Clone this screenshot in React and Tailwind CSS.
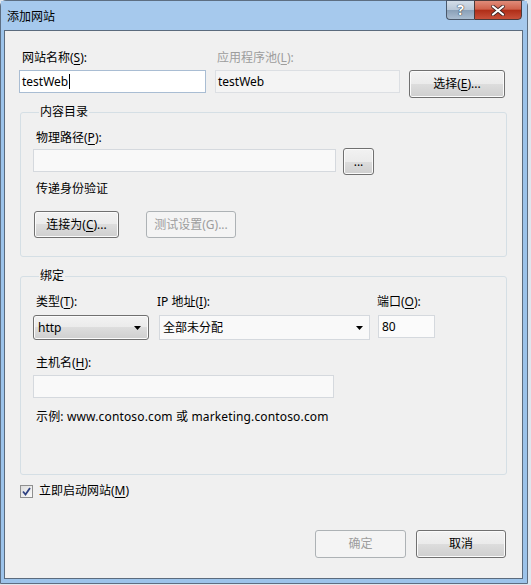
import React from "react";

const font = "font-['Noto_Sans','Noto_Sans_CJK_SC',sans-serif]";

const btn =
  "flex items-center justify-center rounded-[3px] border border-[#707070] bg-[linear-gradient(#f2f2f2_0%,#ebebeb_50%,#dddddd_50%,#cfcfcf_100%)] shadow-[inset_0_0_0_1px_#fbfbfb] text-[12px] text-black";
const btnOff =
  "flex items-center justify-center rounded-[3px] border border-[#adb2b5] bg-[#f4f4f4] text-[12px] text-[#9d9d9d]";
const field = "flex items-center border border-[#d5d9de] bg-[#f9f9f9] px-[3px] text-[12px]";

function Arrow() {
  return (
    <svg width="7" height="4" viewBox="0 0 7 4">
      <polygon points="0,0 7,0 3.5,4" fill="#000" />
    </svg>
  );
}

function Label({ children, gray, className = "" }) {
  return (
    <div className={`text-[12px] leading-[16px] ${gray ? "text-[#9d9d9d]" : "text-black"} ${className}`}>
      {children}
    </div>
  );
}

function Group({ title, className = "", children }) {
  return (
    <fieldset className={`ml-[1px] rounded-[3px] border border-[#d5dfe5] ${className}`}>
      <legend className="ml-[6px] px-[1px] text-[12px] leading-[16px] text-black">{title}</legend>
      {children}
    </fieldset>
  );
}

export default function App() {
  return (
    <div className={`h-[585px] w-[531px] bg-[#dfe6ee] ${font}`}>
      <div className="flex h-[584px] w-[528px] flex-col rounded-t-[6px] border border-[#5d6e82] bg-[#9cc3ea]">
        {/* title bar */}
        <div className="flex h-[29px] bg-[#a6c9ed]">
          <div className="ml-[6px] pt-[8px] text-[12px] leading-[16px] text-black">添加网站</div>
          <div className="ml-auto mr-[5px] -mt-[1px] flex self-start">
            <div className="flex h-[20px] w-[28px] items-center justify-center rounded-bl-[4px] border border-r-0 border-[#4a586b] bg-[linear-gradient(#d3dde8_0%,#b9c8d8_48%,#8aa0b8_52%,#aabdd1_100%)]">
              <span className="text-[14px] font-bold leading-none text-white [text-shadow:0_0_1px_#1c2430,0_0_1px_#1c2430]">
                ?
              </span>
            </div>
            <div className="flex h-[20px] w-[48px] items-center justify-center rounded-br-[4px] border border-[#4a3a3a] bg-[linear-gradient(#e08c7a_0%,#d0624c_45%,#b02e18_52%,#c8503a_100%)]">
              <svg width="14" height="11" viewBox="0 0 14 11">
                <path d="M2 1.5 L12 9.5 M12 1.5 L2 9.5" stroke="#3a2222" strokeWidth="3.6" strokeLinecap="round" />
                <path d="M2 1.5 L12 9.5 M12 1.5 L2 9.5" stroke="#ffffff" strokeWidth="2.2" strokeLinecap="round" />
              </svg>
            </div>
          </div>
        </div>

        {/* client area */}
        <div className="ml-[3px] mr-[4px] flex h-[549px] flex-col border border-[#5b6b7d] bg-[#f0f0f0] pl-[14px] pr-[15px] pt-[19px]">
          <div className="flex gap-[9px]">
            <div className="w-[187px]">
              <Label className="ml-[3px]">
                网站名称(<u className="underline-offset-2">S</u>):
              </Label>
              <div className="mt-[4px] flex h-[23px] items-center border border-[#a9bdd3] bg-white px-[2px] text-[12px]">
                testWeb
                <span className="ml-[1px] h-[15px] w-px bg-black" />
              </div>
            </div>
            <div className="w-[185px]">
              <Label gray className="ml-[2px]">
                应用程序池(<u className="underline-offset-2">L</u>):
              </Label>
              <div className="mt-[4px] flex h-[23px] items-center border border-[#dcdfe3] bg-[#f4f4f4] px-[2px] text-[12px] text-black">
                testWeb
              </div>
            </div>
            <div className={`${btn} mt-[20px] h-[28px] w-[96px]`}>
              选择(<u className="underline-offset-2">E</u>)...
            </div>
          </div>

          <Group title="内容目录" className="mt-[6px] pb-[18px] pl-[12px]">
            <Label className="ml-[3px] mt-[10px]">
              物理路径(<u className="underline-offset-2">P</u>):
            </Label>
            <div className="mt-[2px] flex items-start gap-[7px]">
              <div className={`${field} mt-[1px] h-[23px] w-[303px]`} />
              <div className={`${btn} h-[27px] w-[31px] leading-none`}>...</div>
            </div>
            <Label className="ml-[3px] mt-[6px]">传递身份验证</Label>
            <div className="ml-[1px] mt-[14px] flex gap-[27px]">
              <div className={`${btn} h-[27px] w-[85px]`}>
                连接为(<u className="underline-offset-2">C</u>)...
              </div>
              <div className={`${btnOff} h-[27px] w-[90px]`}>测试设置(G)...</div>
            </div>
          </Group>

          <Group title="绑定" className="mt-[11px] pb-[49px] pl-[12px]">
            <div className="mt-[10px] flex">
              <div className="w-[116px]">
                <Label className="ml-[3px]">
                  类型(<u className="underline-offset-2">T</u>):
                </Label>
                <div className={`${btn} mt-[5px] h-[25px] w-full justify-between! pl-[4px] pr-[7px]`}>
                  <span>http</span>
                  <Arrow />
                </div>
              </div>
              <div className="ml-[8px] w-[213px]">
                <Label>
                  IP 地址(<u className="underline-offset-2">I</u>):
                </Label>
                <div className={`${field} ml-[2px] mt-[5px] h-[25px] w-[211px] justify-between pr-[6px]`}>
                  <span>全部未分配</span>
                  <Arrow />
                </div>
              </div>
              <div className="ml-[7px]">
                <Label>
                  端口(<u className="underline-offset-2">O</u>):
                </Label>
                <div className={`${field} ml-[1px] mt-[5px] h-[23px] w-[57px] bg-[#fbfbfb]`}>80</div>
              </div>
            </div>
            <Label className="ml-[3px] mt-[15px]">
              主机名(<u className="underline-offset-2">H</u>):
            </Label>
            <div className={`${field} mt-[4px] h-[23px] w-[301px]`} />
            <Label className="ml-[3px] mt-[11px] tracking-[0.15px]">
              示例: www.contoso.com 或 marketing.contoso.com
            </Label>
          </Group>

          <div className="ml-[1px] mt-[8px] flex items-center gap-[6px]">
            <div className="flex h-[13px] w-[13px] items-center justify-center border border-[#8e8f8f] bg-[linear-gradient(135deg,#dcdcdc,#fbfbfb)]">
              <svg width="9" height="9" viewBox="0 0 9 9">
                <path d="M1 4.5 L3.5 7.5 L8 1" fill="none" stroke="#2f4282" strokeWidth="1.8" />
              </svg>
            </div>
            <Label>
              立即启动网站(<u className="underline-offset-2">M</u>)
            </Label>
          </div>

          <div className="mt-[31px] flex justify-end gap-[10px] pr-[1px]">
            <div className={`${btnOff} h-[28px] w-[91px]`}>确定</div>
            <div className={`${btn} h-[28px] w-[90px]`}>取消</div>
          </div>
        </div>
      </div>
    </div>
  );
}
